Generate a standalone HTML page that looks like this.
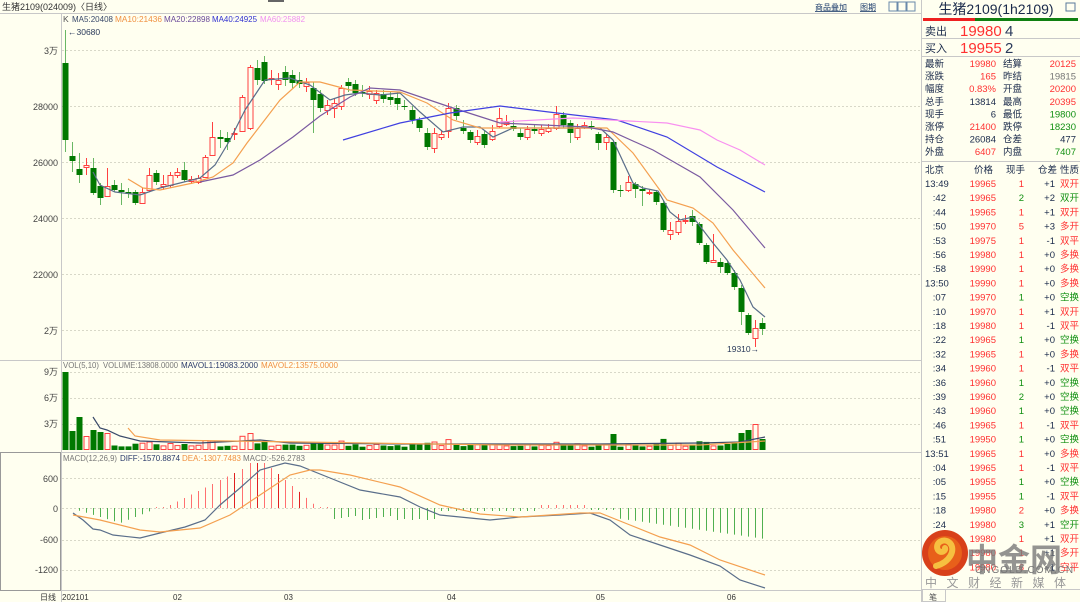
<!DOCTYPE html>
<html><head><meta charset="utf-8"><style>
html,body{margin:0;padding:0;background:#fffff0;width:1080px;height:602px;overflow:hidden}
svg text{font-family:"Liberation Sans","Noto Sans CJK SC",sans-serif}
</style></head><body>
<svg id="s" width="1080" height="602" xmlns="http://www.w3.org/2000/svg">
<rect x="0" y="0" width="1080" height="602" fill="#fffff0"/>
<line x1="0" y1="13.5" x2="922" y2="13.5" stroke="#c8c8c8"/>
<text x="2" y="10" font-size="9" fill="#333">生猪2109(024009)〈日线〉</text>
<rect x="268" y="0" width="16" height="2" fill="#666"/>
<text x="815" y="10" font-size="8" fill="#1a3a6a" text-decoration="underline">商品叠加</text>
<text x="860" y="10" font-size="8" fill="#1a3a6a" text-decoration="underline">图期</text>
<rect x="889" y="2" width="8" height="9" fill="none" stroke="#6a8aaa"/>
<rect x="898" y="2" width="8" height="9" fill="none" stroke="#6a8aaa"/>
<rect x="907" y="2" width="8" height="9" fill="none" stroke="#6a8aaa"/>
<line x1="61.5" y1="13" x2="61.5" y2="602" stroke="#c8c8c8"/>
<line x1="0" y1="360.5" x2="922" y2="360.5" stroke="#c8c8c8"/>
<line x1="0" y1="452.5" x2="922" y2="452.5" stroke="#c8c8c8"/>
<line x1="0" y1="590.5" x2="922" y2="590.5" stroke="#c8c8c8"/>
<rect x="0.5" y="452.5" width="60" height="138" fill="none" stroke="#999"/>
<line x1="921.5" y1="0" x2="921.5" y2="602" stroke="#c8c8c8"/>
<g id="grid" stroke="#d8d8c8" stroke-dasharray="2,2"></g>
<g font-size="9" fill="#444" text-anchor="end">
<text x="58" y="54">3万</text><text x="58" y="110">28000</text><text x="58" y="166">26000</text>
<text x="58" y="222">24000</text><text x="58" y="278">22000</text><text x="58" y="334">2万</text>
<text x="58" y="375">9万</text><text x="58" y="401">6万</text><text x="58" y="427">3万</text>
<text x="58" y="482">600</text><text x="58" y="512">0</text><text x="58" y="543">-600</text><text x="58" y="573">-1200</text>
</g>
<g font-size="8.5" lengthAdjust="spacingAndGlyphs">
<text x="63" y="22" fill="#555">K</text>
<text x="72" y="22" fill="#3a4a6a" textLength="41" lengthAdjust="spacingAndGlyphs">MA5:20408</text>
<text x="115" y="22" fill="#f09040" textLength="47" lengthAdjust="spacingAndGlyphs">MA10:21436</text>
<text x="164" y="22" fill="#6a4a9a" textLength="46" lengthAdjust="spacingAndGlyphs">MA20:22898</text>
<text x="212" y="22" fill="#3030d0" textLength="45" lengthAdjust="spacingAndGlyphs">MA40:24925</text>
<text x="260" y="22" fill="#f090f0" textLength="45" lengthAdjust="spacingAndGlyphs">MA60:25882</text>
<text x="63" y="368" fill="#777" textLength="36" lengthAdjust="spacingAndGlyphs">VOL(5,10)</text>
<text x="103" y="368" fill="#777" textLength="75" lengthAdjust="spacingAndGlyphs">VOLUME:13808.0000</text>
<text x="181" y="368" fill="#2a3a6a" textLength="77" lengthAdjust="spacingAndGlyphs">MAVOL1:19083.2000</text>
<text x="261" y="368" fill="#f09040" textLength="77" lengthAdjust="spacingAndGlyphs">MAVOL2:13575.0000</text>
<text x="63" y="461" fill="#777" textLength="54" lengthAdjust="spacingAndGlyphs">MACD(12,26,9)</text>
<text x="120" y="461" fill="#2a3a6a" textLength="60" lengthAdjust="spacingAndGlyphs">DIFF:-1570.8874</text>
<text x="182" y="461" fill="#f09040" textLength="59" lengthAdjust="spacingAndGlyphs">DEA:-1307.7483</text>
<text x="243" y="461" fill="#777" textLength="62" lengthAdjust="spacingAndGlyphs">MACD:-526.2783</text>
<text x="68" y="35" fill="#2a3a5a">←30680</text>
<text x="727" y="352" fill="#2a3a5a">19310→</text>
</g>
<g font-size="8" fill="#333">
<text x="40" y="600">日线</text><text x="62" y="600">202101</text><text x="173" y="600">02</text><text x="284" y="600">03</text>
<text x="447" y="600">04</text><text x="596" y="600">05</text><text x="727" y="600">06</text>
</g>
<g id="chart"></g>

<g font-family="'Liberation Serif','Noto Serif CJK SC',serif">
<text x="996" y="14" font-size="14" fill="#1a2a4a" text-anchor="middle">生猪2109(1h2109)</text>
</g>
<rect x="1066" y="3" width="9" height="8" fill="none" stroke="#5a7a9a"/>
<rect x="923" y="18" width="52" height="3" fill="#ee2020"/>
<rect x="975" y="18" width="103" height="3" fill="#108010"/>
<g font-size="11" fill="#1a2a4a"><text x="925" y="35">卖出</text><text x="925" y="52">买入</text></g>
<g font-family="'Liberation Serif',serif" font-size="15">
<text x="960" y="36" fill="#ff3030">19980</text><text x="1005" y="36" fill="#2a3a5a">4</text>
<text x="960" y="53" fill="#ff3030">19955</text><text x="1005" y="53" fill="#2a3a5a">2</text>
</g>
<line x1="922" y1="38.5" x2="1080" y2="38.5" stroke="#c8c8c8"/>
<line x1="922" y1="56.5" x2="1080" y2="56.5" stroke="#c8c8c8"/>
<line x1="922" y1="161.5" x2="1080" y2="161.5" stroke="#c8c8c8"/>
<g id="rp" font-size="9.5"></g>
<circle cx="945" cy="553" r="23" fill="#d8401a"/>
<circle cx="945" cy="553" r="17" fill="#e8601a"/>
<path d="M936 566 C950 562 956 550 950 543 C944 537 934 543 938 550 C941 554 946 551 945 548" fill="none" stroke="#f6c040" stroke-width="6" stroke-linecap="round"/>
<text x="966" y="571" font-size="32" font-weight="bold" fill="#7a7a7a" opacity="0.8" font-family="'Noto Sans CJK SC',sans-serif">中金网</text>
<text x="975" y="573" font-size="10" fill="#777" letter-spacing="1">CNGOLD.COM.CN</text>
<text x="925" y="587" font-size="12" fill="#999" letter-spacing="9.5">中文财经新媒体</text>
<line x1="922" y1="589.5" x2="1080" y2="589.5" stroke="#c8c8c8"/>
<rect x="922.5" y="589.5" width="23" height="12" fill="#fffff0" stroke="#c8c8c8"/>
<text x="929" y="600" font-size="8" fill="#555">笔</text>
</svg>
<script>
var NS="http://www.w3.org/2000/svg",ch=document.getElementById('chart');
function el(t,a,p){var e=document.createElementNS(NS,t);for(var k in a)e.setAttribute(k,a[k]);(p||ch).appendChild(e);return e;}
var g=document.getElementById('grid');
[50,106,162,218,274,330,372,398,424,478,508,540,570].forEach(function(y){el('line',{x1:62,y1:y+.5,x2:921,y2:y+.5},g);});
var C=[[65,63,140,30,152],[72,156,161,142,172],[79,169,175,153,183],[86,167,165,158,175],[93,168,193,158,195],[100,186,198,183,205],[107,196,186,168,197],[114,185,190,180,192],[121,190,192,183,205],[128,192,194,188,198],[135,192,203,190,205],[142,203,192,188,204],[149,190,175,168,192],[156,173,182,170,185],[163,186,184,175,190],[170,185,175,172,188],[177,175,172,168,178],[184,170,180,162,182],[191,181,179,176,184],[198,182,178,175,184],[205,177,157,155,178],[212,155,137,122,156],[220,137,139,130,148],[227,138,142,132,150],[234,134,133,128,140],[242,131,97,95,132],[250,128,67,65,130],[257,68,80,60,85],[264,62,81,56,84],[271,79,78,70,85],[278,84,80,73,90],[285,72,80,66,86],[292,75,83,70,88],[299,80,84,72,88],[306,86,82,78,92],[313,88,100,82,133],[320,94,108,90,112],[327,110,105,100,115],[334,108,103,98,118],[341,106,88,85,110],[348,82,86,78,92],[355,84,93,80,96],[362,92,93,85,97],[369,94,91,86,99],[376,100,93,90,104],[383,94,99,90,103],[390,97,100,92,105],[397,98,104,92,110],[404,106,107,100,110],[412,110,120,106,124],[419,120,128,117,132],[427,133,147,128,150],[434,148,133,128,153],[441,137,134,130,140],[448,131,108,103,138],[456,108,116,105,120],[463,128,131,120,134],[470,132,140,130,143],[477,142,136,130,145],[484,134,145,130,148],[492,139,131,125,141],[499,126,118,108,128],[506,124,122,115,126],[513,126,129,120,131],[520,133,137,128,140],[527,137,129,126,140],[534,129,131,124,134],[541,133,129,125,136],[548,131,128,124,133],[556,128,114,106,130],[563,115,125,112,128],[570,123,133,120,143],[577,137,128,124,140],[584,127,125,122,129],[591,126,127,121,130],[598,134,143,132,150],[606,142,137,134,150],[613,142,190,140,193],[620,190,191,185,197],[628,190,182,176,192],[635,184,189,182,198],[642,189,191,186,206],[649,193,192,190,195],[656,192,202,190,205],[663,203,230,200,232],[670,234,230,222,240],[678,232,221,214,235],[685,221,220,215,224],[692,216,222,210,226],[699,224,243,222,245],[706,245,262,243,264],[713,262,260,234,263],[720,262,267,258,273],[727,263,273,260,275],[734,273,287,270,290],[741,288,312,285,325],[748,315,333,313,335],[755,338,328,320,347],[762,323,329,318,335]];
var R='#ff4040',G='#007800';
var VO={0:78,1:19,2:33,3:13,4:20,5:18,6:16};
C.forEach(function(c,i){var x=c[0],o=c[1],cl=c[2],up=cl<o,col=up?R:G;
 var t=Math.min(o,cl),b=Math.max(o,cl);
 el('line',{x1:x+.5,y1:c[3],x2:x+.5,y2:c[4],stroke:up?R:'#2a9a2a','stroke-width':1,opacity:up?1:.7});
 if(b-t<1){el('line',{x1:x-2,y1:t+.5,x2:x+3,y2:t+.5,stroke:col});}
 else if(up)el('rect',{x:x-2,y:t+.5,width:5,height:b-t,fill:'#fffff0',stroke:col});
 else el('rect',{x:x-2.5,y:t,width:6,height:b-t,fill:col});
 var v=VO[i]; if(v===undefined)v=Math.min(16,Math.abs(o-cl)*0.3+3);
 if(i==C.length-4)v=17; if(i==C.length-3)v=20; if(i==C.length-2)v=25; if(i==C.length-1)v=11;
 if(up)el('rect',{x:x-2,y:449.5-v,width:5,height:v,fill:'none',stroke:R});else el('rect',{x:x-2.5,y:450-v,width:6,height:v,fill:G});
});
function pl(p,col){el('polyline',{points:p,fill:'none',stroke:col,'stroke-width':1.2});}
pl("93,172 100,185 115,192 140,195 160,188 180,183 200,178 215,165 230,140 245,110 265,80 290,78 310,85 330,100 345,95 360,93 380,95 400,93 420,112 443,132 463,127 480,127 493,137 513,128 600,128 613,140 633,183 643,188 658,191 670,212 680,220 693,217 713,243 727,260 740,280 753,307 765,317","#5a6e8a");
pl("128,179 143,188 160,190 193,183 213,177 233,163 247,143 267,117 280,100 300,82 320,82 350,90 400,92 427,103 453,120 480,128 500,128 587,128 607,128 633,153 667,200 693,208 713,223 733,250 765,288","#f4a050");
pl("200,182 233,175 260,160 293,137 320,116 350,97 370,88 400,90 450,107 500,123 587,127 613,132 653,150 700,177 733,210 765,248","#7a5aa0");
pl("343,140 400,123 450,113 500,106 557,113 617,120 667,137 717,167 765,192","#4040e0");
pl("500,122 573,118 667,123 700,130 717,140 740,150 765,165","#f890f0");
pl("93,417 100,428 107,430 120,436 140,441 200,443 260,440 290,443 400,444 600,444 700,443 740,442 765,437","#3a4a6a");
pl("128,428 135,436 160,440 300,442 500,445 700,445 765,441","#f4a050");
for(var i=0;i<C.length;i++){var x=C[i][0];if(x<73)continue;var h;
 if(x<155)h=-(x<120?(x-70)*0.3:Math.max(1,15-(x-120)*0.4));
 else if(x<170)h=1;
 else if(x<245)h=3+(x-170)*0.5;
 else if(x<265)h=45;
 else if(x<315)h=45-(x-265)*0.85;
 else if(x<330)h=1;
 else if(x<440)h=-(8+((x*7)%5));
 else if(x<540)h=-3;
 else if(x<585)h=3;
 else if(x<615)h=-2;
 else h=-(10+(x-615)*0.14);
 var col=h>0?'#ff7070':'#50b050';
 if(x>=227&&x<300&&i%3==0)col='#e02020';
 el('line',{x1:x+.5,y1:508,x2:x+.5,y2:508-h,stroke:col,'stroke-width':1});
}
pl("73,513 83,520 93,529 100,530 113,535 140,538 160,533 185,527 205,520 220,505 240,488 260,470 285,463 300,466 330,478 360,490 400,497 420,507 440,515 470,518 490,520 520,517 560,515 590,513 610,520 630,535 660,545 690,555 720,566 740,580 765,588","#5a6e8a");
pl("73,515 100,520 140,530 160,532 200,528 230,515 260,495 290,475 310,470 320,470 350,475 400,487 440,505 480,514 520,517 580,513 600,513 630,525 660,537 690,545 720,560 765,575","#f4a050");
var rp=document.getElementById('rp');
function tx(x,y,s,col,anc){var e=el('text',{x:x,y:y,fill:col,'text-anchor':anc||'start'},rp);e.textContent=s;}
var N='#1a2a4a',RR='#ff3030',GG='#109010',GR='#777';
var q=[["最新","19980",RR,"结算","20125",RR],["涨跌","165",RR,"昨结","19815",GR],["幅度","0.83%",RR,"开盘","20200",RR],["总手","13814",N,"最高","20395",RR],["现手","6",N,"最低","19800",GG],["涨停","21400",RR,"跌停","18230",GG],["持仓","26084",N,"仓差","477",N],["外盘","6407",RR,"内盘","7407",GG]];
q.forEach(function(r,i){var y=67+i*12.6;tx(925,y,r[0],N);tx(996,y,r[1],r[2],'end');tx(1003,y,r[3],N);tx(1076,y,r[4],r[5],'end');});
tx(925,173,"北京",N);tx(993,173,"价格",N,'end');tx(1006,173,"现手",N);tx(1057,173,"仓差",N,'end');tx(1060,173,"性质",N);
var T=[["13:49","19965","1",1,"+1","双开",1],[":42","19965","2",0,"+2","双开",0],[":44","19965","1",1,"+1","双开",1],[":50","19970","5",1,"+3","多开",1],[":53","19975","1",1,"-1","双平",1],[":56","19980","1",1,"+0","多换",1],[":58","19990","1",1,"+0","多换",1],["13:50","19990","1",1,"+0","多换",1],[":07","19970","1",0,"+0","空换",0],[":10","19970","1",1,"+1","双开",1],[":18","19980","1",1,"-1","双平",1],[":22","19965","1",0,"+0","空换",0],[":32","19965","1",1,"+0","多换",1],[":34","19960","1",1,"-1","双平",1],[":36","19960","1",0,"+0","空换",0],[":39","19960","2",0,"+0","空换",0],[":43","19960","1",0,"+0","空换",0],[":46","19965","1",1,"-1","双平",1],[":51","19950","1",0,"+0","空换",0],["13:51","19965","1",1,"+0","多换",1],[":04","19965","1",1,"-1","双平",1],[":05","19955","1",0,"+0","空换",0],[":15","19955","1",0,"-1","双平",1],[":18","19980","2",1,"+0","多换",1],[":24","19980","3",0,"+1","空开",0],["","19980","1",1,"+1","双开",1],["","19980","1",1,"+1","多开",1],["","19980","6",1,"-1","空平",1]];
T.forEach(function(r,i){var y=187+i*14.2;var full=r[0].length>3;
 if(full)tx(925,y,r[0],N);else tx(946,y,r[0],N,'end');
 tx(996,y,r[1],RR,'end');tx(1024,y,r[2],r[3]?RR:GG,'end');tx(1055,y,r[4],N,'end');tx(1060,y,r[5],r[6]?RR:GG);});
</script>
</body></html>
